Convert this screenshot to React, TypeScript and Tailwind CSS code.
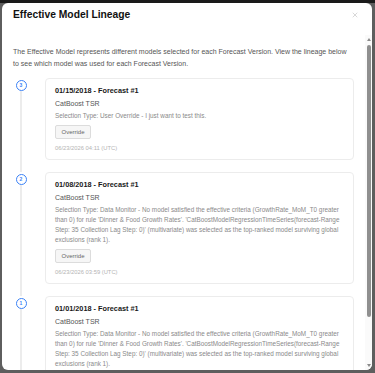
import React from "react";
import { X } from "lucide-react";

type Entry = {
  step: number;
  title: string;
  model: string;
  selection: string;
  time: string;
};

const longSelection =
  "Selection Type: Data Monitor - No model satisfied the effective criteria (GrowthRate_MoM_T0 greater than 0) for rule 'Dinner & Food Growth Rates'. 'CatBoostModelRegressionTimeSeries(forecast-Range Step: 35 Collection Lag Step: 0)' (multivariate) was selected as the top-ranked model surviving global exclusions (rank 1).";

const entries: Entry[] = [
  {
    step: 3,
    title: "01/15/2018 - Forecast #1",
    model: "CatBoost TSR",
    selection: "Selection Type: User Override - I just want to test this.",
    time: "06/23/2026 04:11 (UTC)",
  },
  {
    step: 2,
    title: "01/08/2018 - Forecast #1",
    model: "CatBoost TSR",
    selection: longSelection,
    time: "06/23/2026 03:59 (UTC)",
  },
  {
    step: 1,
    title: "01/01/2018 - Forecast #1",
    model: "CatBoost TSR",
    selection: longSelection,
    time: "06/23/2026 03:40 (UTC)",
  },
];

function LineageItem({ entry }: { entry: Entry }) {
  return (
    <div className="flex">
      {/* Step marker + connector */}
      <div className="w-[16px] shrink-0 flex flex-col items-center">
        <div className="mt-[1.5px] w-[11px] h-[11px] rounded-full border border-[#3b82f6] bg-white flex items-center justify-center text-[5px] leading-none text-[#3b82f6] font-bold">
          {entry.step}
        </div>
        <div className="flex-1 w-[2px] bg-[#ececec] -mb-[12px]" />
      </div>

      {/* Card */}
      <div className="ml-[16px] flex-1 min-w-0 border border-[#ececec] rounded-[4px] bg-white px-[9px] pt-[6px] pb-[6px]">
        <div className="text-[7.3px] leading-[12px] font-bold text-[#1a1a1a]">{entry.title}</div>
        <div className="mt-[1px] text-[7px] leading-[12px] text-[#555]">{entry.model}</div>
        <div className="mt-[1px] text-[6.35px] leading-[10px] text-[#8a8a8a]">{entry.selection}</div>
        <div className="mt-[4px] flex">
          <div className="h-[14px] w-[36px] rounded-[2px] border border-[#dcdcdc] bg-[#f6f6f6] flex items-center justify-center text-[6px] text-[#666]">
            Override
          </div>
        </div>
        <div className="mt-[4px] text-[5.8px] leading-[10px] text-[#b4b4b4]">{entry.time}</div>
      </div>
    </div>
  );
}

export default function App() {
  return (
    <div className="relative w-[375px] h-[373px] overflow-hidden bg-[#5e5e5e] pt-[3px] pb-[3px] pl-[2px] pr-[3px] font-['Liberation_Sans',Arial,sans-serif]">
      {/* page header peeking behind the overlay */}
      <div className="absolute top-0 left-0 right-0 h-[3px] bg-[#1a1a1a]" />

      <div className="h-full flex flex-col bg-white rounded-[6px] overflow-hidden">
        {/* Header */}
        <div className="h-[32px] shrink-0 flex items-start justify-between pl-[11px] pr-[13px] pt-[3px]">
          <h2 className="text-[10.3px] leading-[18px] font-bold text-[#111]">Effective Model Lineage</h2>
          <X className="mt-[5px] w-[8px] h-[8px] text-[#b0b0b0]" strokeWidth={1.5} />
        </div>

        {/* Body */}
        <div className="flex-1 min-h-0 flex">
          <div className="flex-1 min-w-0 overflow-hidden pl-[11px] pr-[11px] pt-[11px]">
            <p className="text-[7px] leading-[12px] text-[#555]">
              The Effective Model represents different models selected for each Forecast Version. View the lineage below to see which model was used for each Forecast Version.
            </p>
            <div className="mt-[8px] flex flex-col gap-[12px]">
              {entries.map((e) => (
                <LineageItem key={e.step} entry={e} />
              ))}
            </div>
          </div>

          {/* Scrollbar */}
          <div className="w-[7px] shrink-0 flex flex-col items-center bg-[#fafafa] py-[3px]">
            <div className="w-0 h-0 border-l-[2px] border-r-[2px] border-b-[3px] border-l-transparent border-r-transparent border-b-[#8a8a8a]" />
            <div className="mt-[4px] w-[4px] h-[272px] rounded-full bg-[#8f8f8f]" />
            <div className="flex-1" />
            <div className="w-0 h-0 border-l-[2px] border-r-[2px] border-t-[3px] border-l-transparent border-r-transparent border-t-[#8a8a8a]" />
          </div>
        </div>
      </div>
    </div>
  );
}
